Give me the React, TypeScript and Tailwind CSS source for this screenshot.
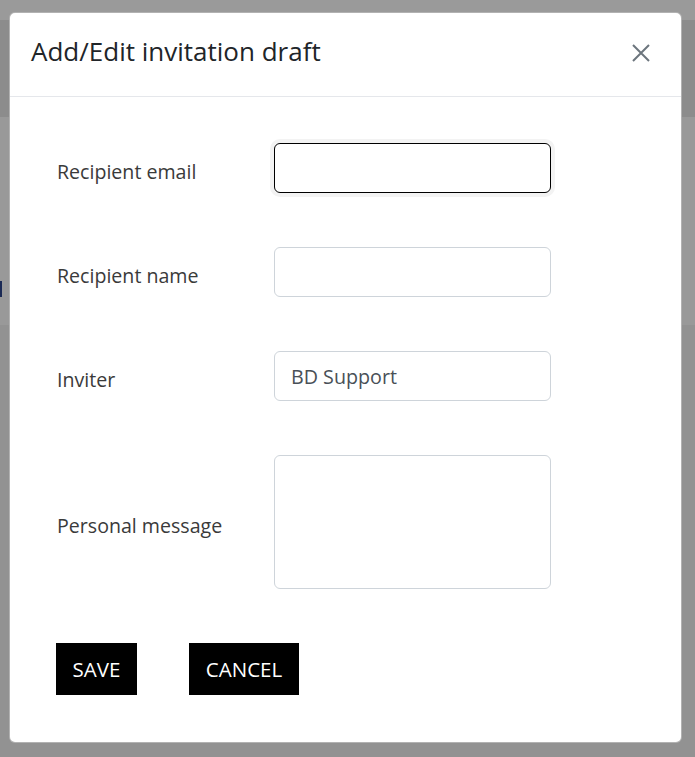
import React from 'react';

const font = { fontFamily: '"Open Sans", "Noto Sans", sans-serif' };

function Field({ label, value, focused, tall }: { label: string; value?: string; focused?: boolean; tall?: boolean }) {
  const base = 'w-[277px] rounded-[6px] bg-white px-4 text-[19.7px] text-[#495057] outline-none';
  const border = focused
    ? 'border border-black shadow-[0_0_0_4px_#f3f3f3]'
    : 'border border-[#ced4da]';
  return (
    <div className="flex items-center">
      <label className="mt-[7px] w-[217px] shrink-0 text-[19.6px] text-[#3a3a3a]">{label}</label>
      {tall ? (
        <textarea className={`${base} ${border} h-[134px] resize-none py-2`} defaultValue={value} />
      ) : (
        <input className={`${base} ${border} h-[50px]`} defaultValue={value} />
      )}
    </div>
  );
}

export default function App() {
  return (
    <div className="relative h-[757px] w-[695px] overflow-hidden" style={font}>
      {/* Page behind the overlay */}
      <div className="flex h-full flex-col">
        <div className="h-[20px] bg-[#9a9a9a]" />
        <div className="h-[97px] bg-[#8c8c8c]" />
        <div className="flex h-[208px] items-end bg-[#999999] pb-[28px]">
          <div className="h-[16px] w-[2px] bg-[#1b2a55]" />
        </div>
        <div className="flex-1 bg-[#929292]" />
      </div>

      {/* Modal */}
      <div className="absolute left-[9px] top-[12px] flex h-[731px] w-[673px] flex-col rounded-[6px] border border-black/30 bg-white">
        <div className="flex h-[84px] items-center justify-between border-b border-[#e5e7eb] pb-[6px] pl-[21px] pr-[30px]">
          <h2 className="text-[26px] font-medium text-[#212529]">Add/Edit invitation draft</h2>
          <button className="mt-[2px] text-[#6c757d]">
            <svg width="20" height="20" viewBox="0 0 20 20" fill="none" stroke="currentColor" strokeWidth="2">
              <path d="M2 2L18 18M18 2L2 18" />
            </svg>
          </button>
        </div>

        <div className="flex flex-col gap-[54px] pl-[47px] pt-[46px]">
          <Field label="Recipient email" focused />
          <Field label="Recipient name" />
          <Field label="Inviter" value="BD Support" />
          <Field label="Personal message" tall />
        </div>

        <div className="flex gap-[52px] pl-[46px] pt-[54px]">
          <button className="h-[52px] w-[81px] bg-black text-[20.5px] text-white">SAVE</button>
          <button className="h-[52px] w-[110px] bg-black text-[20.5px] text-white">CANCEL</button>
        </div>
      </div>
    </div>
  );
}
